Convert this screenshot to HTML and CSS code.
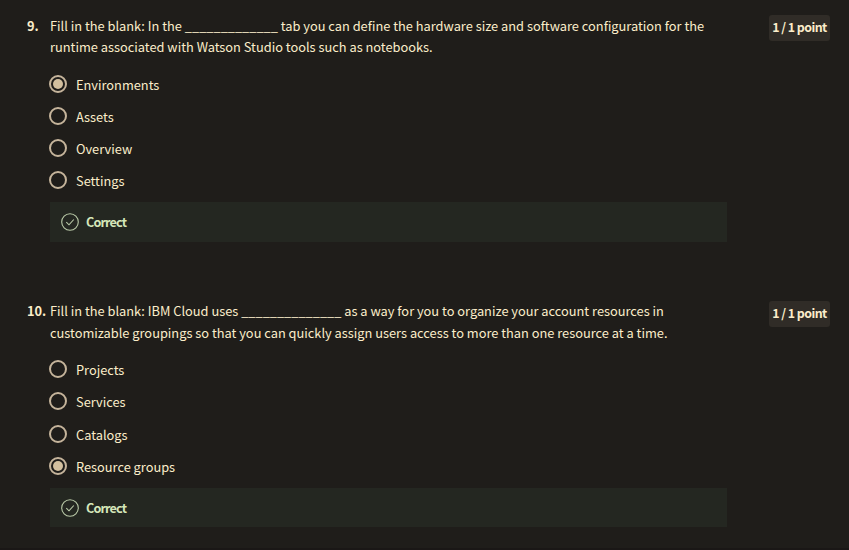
FILE: index.html
```html
<!DOCTYPE html>
<html lang="en">
<head>
<meta charset="utf-8">
<title>Quiz</title>
<link rel="stylesheet" href="styles.css">
</head>
<body>
<main class="quiz">
  <section class="question">
    <div class="number">9.</div>
    <div class="body">
      <p class="prompt"><span class="line">Fill in the blank: In the _____________ tab you can define the hardware size and software configuration for the</span> <span class="line">runtime associated with Watson Studio tools such as notebooks.</span></p>
      <ul class="options">
        <li class="option"><span class="radio checked"></span><span class="label">Environments</span></li>
        <li class="option"><span class="radio"></span><span class="label">Assets</span></li>
        <li class="option"><span class="radio"></span><span class="label">Overview</span></li>
        <li class="option"><span class="radio"></span><span class="label">Settings</span></li>
      </ul>
      <div class="feedback"><svg class="check" viewBox="0 0 18 18"><circle cx="9" cy="9" r="8.3"/><path d="M5.3 9.2 8 11.8 12.8 6.5"/></svg><span class="verdict">Correct</span></div>
    </div>
    <div class="points">1 / 1 point</div>
  </section>
  <section class="question second">
    <div class="number">10.</div>
    <div class="body">
      <p class="prompt"><span class="line">Fill in the blank: IBM Cloud uses ______________ as a way for you to organize your account resources in</span> <span class="line">customizable groupings so that you can quickly assign users access to more than one resource at a time.</span></p>
      <ul class="options">
        <li class="option"><span class="radio"></span><span class="label">Projects</span></li>
        <li class="option"><span class="radio"></span><span class="label">Services</span></li>
        <li class="option"><span class="radio"></span><span class="label">Catalogs</span></li>
        <li class="option"><span class="radio checked"></span><span class="label">Resource groups</span></li>
      </ul>
      <div class="feedback"><svg class="check" viewBox="0 0 18 18"><circle cx="9" cy="9" r="8.3"/><path d="M5.3 9.2 8 11.8 12.8 6.5"/></svg><span class="verdict">Correct</span></div>
    </div>
    <div class="points">1 / 1 point</div>
  </section>
</main>
</body>
</html>
```
FILE: styles.css
```css
* { box-sizing: border-box; }
html { overflow: hidden; }
body {
  margin: 0;
  height: 550px;
  overflow: hidden;
  background: #1f1d1a;
  color: #fbedca;
  font: 400 12.8px/21px "Noto Sans CJK SC", "Noto Sans", sans-serif;
  border-bottom: 2px solid #1a1716;
}
.quiz { padding: 15px 19px 0 27px; }
.question {
  display: grid;
  grid-template-columns: 23px 677px 1fr;
  height: 286px;
}
.question.second { height: 240px; margin-top: -1px; }
.number { font-weight: 700; white-space: nowrap; }
.prompt { margin: 0; font-size: 12.82px; }
.line { display: block; white-space: nowrap; }
.second .line + .line { margin-top: 1px; }
.options { list-style: none; margin: 11px 0 0; padding: 0; }
.second .options { margin-top: 10px; }
.option {
  display: flex;
  align-items: center;
  height: 32px;
}
.label { padding-top: 1px; }
.second .option:nth-child(3) { height: 33px; padding-top: 1px; }
.radio {
  display: grid;
  place-items: center;
  width: 18px;
  height: 18px;
  margin: 0 9px 0 -1px;
  border: 2px solid #c5b49b;
  border-radius: 50%;
}
.checked::before {
  content: "";
  width: 10px;
  height: 10px;
  border-radius: 50%;
  background: #d3c09f;
}
.feedback {
  display: flex;
  align-items: center;
  gap: 7px;
  height: 40px;
  margin-top: 6px;
  padding-left: 11px;
  background: #242721;
  color: #d5e6b9;
}
.second .feedback { height: 39px; }
.verdict {
  padding-bottom: 1px;
  font-size: 12.6px;
  font-weight: 700;
  letter-spacing: -0.85px;
}
.check { width: 18px; height: 18px; fill: none; stroke: #b9c9a7; stroke-width: 1.1; }
.points {
  justify-self: end;
  width: 61px;
  height: 26px;
  border-radius: 3px;
  background: #302c27;
  text-align: center;
  font-size: 12.4px;
  font-weight: 700;
  letter-spacing: -0.55px;
  line-height: 25px;
  white-space: nowrap;
}
.second .points { margin-top: 1px; }
```
